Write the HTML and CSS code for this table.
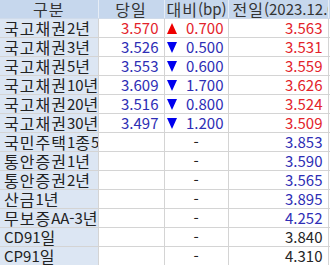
FILE: index.html
```html
<!DOCTYPE html>
<html lang="ko">
<head>
<meta charset="utf-8">
<link rel="stylesheet" href="styles.css">
</head>
<body>
<table class="grid">
  <colgroup>
    <col class="c1"><col class="c2"><col class="c3"><col class="c4"><col class="c5">
  </colgroup>
  <thead>
    <tr>
      <th class="center"><span class="ko">구분</span></th>
      <th class="center"><span class="ko">당일</span></th>
      <th class="center"><span class="ko">대비</span>(bp)</th>
      <th class="left clip"><span class="ko">전일</span>(2023.12.0</th>
      <th></th>
    </tr>
  </thead>
  <tbody>
    <tr><td class="name"><span class="ko">국고채권</span>2<span class="ko">년</span></td><td class="num red">3.570</td><td class="chg red"><span class="tri up"></span>0.700</td><td class="num red">3.563</td><td></td></tr>
    <tr><td class="name"><span class="ko">국고채권</span>3<span class="ko">년</span></td><td class="num blue">3.526</td><td class="chg blue"><span class="tri down"></span>0.500</td><td class="num red">3.531</td><td></td></tr>
    <tr><td class="name"><span class="ko">국고채권</span>5<span class="ko">년</span></td><td class="num blue">3.553</td><td class="chg blue"><span class="tri down"></span>0.600</td><td class="num red">3.559</td><td></td></tr>
    <tr><td class="name"><span class="ko">국고채권</span>10<span class="ko">년</span></td><td class="num blue">3.609</td><td class="chg blue"><span class="tri down"></span>1.700</td><td class="num red">3.626</td><td></td></tr>
    <tr><td class="name"><span class="ko">국고채권</span>20<span class="ko">년</span></td><td class="num blue">3.516</td><td class="chg blue"><span class="tri down"></span>0.800</td><td class="num red">3.524</td><td></td></tr>
    <tr><td class="name"><span class="ko">국고채권</span>30<span class="ko">년</span></td><td class="num blue">3.497</td><td class="chg blue"><span class="tri down"></span>1.200</td><td class="num red">3.509</td><td></td></tr>
    <tr><td class="name clip"><span class="ko">국민주택</span>1<span class="ko">종</span>5</td><td></td><td class="dash">-</td><td class="num blue">3.853</td><td></td></tr>
    <tr><td class="name"><span class="ko">통안증권</span>1<span class="ko">년</span></td><td></td><td class="dash">-</td><td class="num blue">3.590</td><td></td></tr>
    <tr><td class="name"><span class="ko">통안증권</span>2<span class="ko">년</span></td><td></td><td class="dash">-</td><td class="num blue">3.565</td><td></td></tr>
    <tr><td class="name"><span class="ko">산금</span>1<span class="ko">년</span></td><td></td><td class="dash">-</td><td class="num blue">3.895</td><td></td></tr>
    <tr><td class="name"><span class="ko">무보증</span>AA-3<span class="ko">년</span></td><td></td><td class="dash">-</td><td class="num blue">4.252</td><td></td></tr>
    <tr><td class="name">CD91<span class="ko">일</span></td><td></td><td class="dash">-</td><td class="num black">3.840</td><td></td></tr>
    <tr><td class="name">CP91<span class="ko">일</span></td><td></td><td class="dash">-</td><td class="num black">4.310</td><td></td></tr>
  </tbody>
</table>
</body>
</html>
```
FILE: styles.css
```css
html, body {
  margin: 0;
  padding: 0;
  background: #ffffff;
}
body {
  font-family: "Noto Sans CJK KR", "Noto Sans", sans-serif;
  font-size: 15px;
  color: #222222;
  overflow: hidden;
}
.grid {
  border-collapse: collapse;
  table-layout: fixed;
  width: 330px;
}
.c1 { width: 98px; }
.c2 { width: 66px; }
.c3 { width: 64px; }
.c4 { width: 100px; }
.c5 { width: 2px; }

.grid th, .grid td {
  height: 18px;
  line-height: 18px;
  padding: 0 5px;
  white-space: nowrap;
  border-right: 1px solid #d4d4d4;
  border-bottom: 1px solid #d4d4d4;
  box-sizing: border-box;
}
.grid th {
  font-weight: normal;
  color: #333333;
  background: #c6d7ed;
  border-right: 1px solid #e6edf6;
  border-bottom: 1px solid #d0dbea;
  padding: 0 2px;
}
.grid tbody td {
  height: 19px;
}
.ko {
  font-size: 16px;
  letter-spacing: 1px;
  line-height: 18px;
  vertical-align: top;
}
.clip { overflow: hidden; text-overflow: clip; }
.center { text-align: center; }
.left { text-align: left; }
.grid th.left { padding-left: 4px; }
.name {
  background: #dce6f3;
  border-right-color: #d4dbe5;
  border-bottom-color: #eef2f8;
}
.grid td.name { padding-left: 4px; padding-right: 0; }
.num { text-align: right; }
.chg {
  text-align: right;
  position: relative;
}
.grid td.chg { padding-right: 4px; }
.dash { text-align: center; }
.red { color: #e3232b; }
.blue { color: #2e2eb5; }
.black { color: #262626; }
.tri {
  position: absolute;
  left: 2px;
  top: 4px;
  width: 0;
  height: 0;
  border-left: 5.5px solid transparent;
  border-right: 5.5px solid transparent;
}
.tri.up { border-bottom: 11px solid #ee0000; }
.tri.down { border-top: 11px solid #0000ee; }
```
